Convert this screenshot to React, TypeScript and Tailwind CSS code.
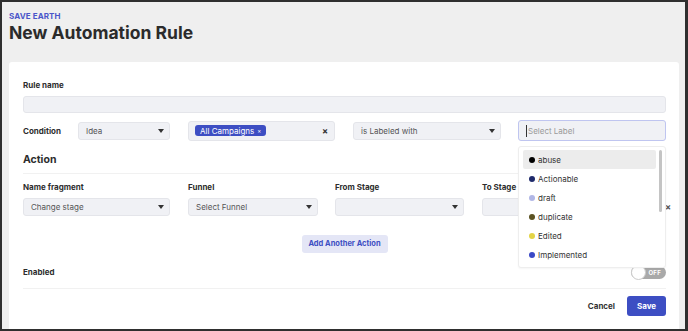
import React from "react";

const Caret = () => (
  <svg className="w-[6px] h-[4px]" viewBox="0 0 6 4">
    <path d="M0 0h6L3 4z" fill="#333" />
  </svg>
);

const Select = ({ value, width }: { value: string; width: string }) => (
  <div
    className={`${width} h-[18px] flex items-center justify-between pl-[7px] pr-[5px] bg-[#f0f1f5] border border-[#e4e5ea] rounded-[3px] text-[8px] text-[#555]`}
  >
    <span>{value}</span>
    <Caret />
  </div>
);

const labels = [
  { name: "abuse", color: "bg-black", active: true },
  { name: "Actionable", color: "bg-[#1f2a6b]" },
  { name: "draft", color: "bg-[#b1b7e6]" },
  { name: "duplicate", color: "bg-[#5b5222]" },
  { name: "Edited", color: "bg-[#e3d447]" },
  { name: "Implemented", color: "bg-[#3a49c6]" },
];

export default function App() {
  return (
    <div
      className="w-[688px] h-[331px] overflow-hidden bg-[#efefef] border-[#2f2f2f] border-t-2 border-l-2 border-b-2 border-r-[3px] pl-[7px] pr-[6px] text-[#2d2d2d]"
      style={{ fontFamily: "Inter, 'Noto Sans', sans-serif" }}
    >
      <div className="pt-[8px] text-[8px] font-bold text-[#4a56c9] tracking-[0.1px] leading-[12px]">
        SAVE EARTH
      </div>
      <h1 className="text-[17.5px] font-bold leading-[22px] text-[#2b2b2b]">
        New Automation Rule
      </h1>

      <div className="relative mt-[18px] bg-white rounded-t-[3px] pl-[14px] pr-[13px] pt-[18px] h-[300px]">
        <div className="text-[8px] font-bold leading-[10px]">Rule name</div>
        <div className="mt-[6px] h-[17px] bg-[#f0f1f5] border border-[#e4e5ea] rounded-[3px]" />

        <div className="mt-[7px] flex items-center">
          <div className="w-[55px] text-[8px] font-bold">Condition</div>
          <Select value="Idea" width="w-[92px]" />
          <div className="ml-[18px] w-[147px] h-[20px] flex items-center justify-between pl-[6px] pr-[6px] bg-[#f0f1f5] border border-[#e4e5ea] rounded-[3px]">
            <span className="bg-[#3d4ec3] text-white text-[8px] rounded-[3px] px-[5px] h-[11px] flex items-center gap-[3px]">
              All Campaigns <span className="text-[6px]">×</span>
            </span>
            <span className="text-[9px] font-bold text-[#333]">×</span>
          </div>
          <div className="ml-[18px]">
            <Select value="is Labeled with" width="w-[148px]" />
          </div>
          <div className="ml-[17px] w-[148px] h-[21px] flex items-center pl-[7px] bg-[#f0f1f5] border border-[#bfc5f0] rounded-[3px] text-[8px] text-[#999]">
            <span className="border-l border-[#333] pl-[1px]">Select Label</span>
          </div>
        </div>

        <div className="mt-[11px] text-[10.5px] font-bold leading-[16px]">Action</div>
        <div className="mt-[5px] h-[1px] bg-[#f1f1f1]" />

        <div className="mt-[8px] flex text-[8px] font-bold leading-[10px]">
          <div className="w-[165px]">Name fragment</div>
          <div className="w-[147px]">Funnel</div>
          <div className="w-[147px]">From Stage</div>
          <div>To Stage</div>
        </div>
        <div className="mt-[6px] flex items-center">
          <Select value="Change stage" width="w-[147px]" />
          <div className="ml-[18px]">
            <Select value="Select Funnel" width="w-[130px]" />
          </div>
          <div className="ml-[17px]">
            <Select value="" width="w-[129px]" />
          </div>
          <div className="ml-[18px]">
            <Select value="" width="w-[130px]" />
          </div>
          <span className="ml-auto mr-[-5px] text-[9px] font-bold text-[#555]">×</span>
        </div>

        <div className="mt-[19px] flex justify-center">
          <button className="w-[86px] h-[18px] bg-[#e4e6f6] text-[#3d4ec3] text-[7.5px] font-bold rounded-[3px]">
            Add Another Action
          </button>
        </div>

        <div className="mt-[12px] flex items-center justify-between h-[14px]">
          <div className="text-[8px] font-bold">Enabled</div>
          <div className="w-[35px] h-[13px] bg-[#a9a9a9] rounded-full flex items-center justify-end pr-[5px] relative">
            <div className="absolute left-0 top-[-1px] w-[15px] h-[15px] rounded-full bg-white border border-[#ccc]" />
            <span className="text-[6px] font-bold text-white tracking-[0.3px]">OFF</span>
          </div>
        </div>
        <div className="mt-[9px] h-[1px] bg-[#f1f1f1]" />

        <div className="mt-[7px] flex items-center justify-end gap-[12px]">
          <span className="text-[8px] font-bold text-[#333]">Cancel</span>
          <button className="w-[39px] h-[20px] bg-[#3d4ec3] text-white text-[8px] font-bold rounded-[3px]">
            Save
          </button>
        </div>

        <div className="absolute left-[509px] top-[84px] w-[148px] h-[122px] bg-white border border-[#eeeeee] rounded-[3px] shadow-[0_1px_2px_rgba(0,0,0,0.04)] pt-[3px] pl-[4px] pr-[3px]">
          <div className="flex">
            <div className="flex-1">
              {labels.map((l) => (
                <div
                  key={l.name}
                  className={`h-[19px] flex items-center gap-[3px] pl-[6px] text-[8px] text-[#333] rounded-[2px] ${l.active ? "bg-[#ececec]" : ""}`}
                >
                  <span className={`w-[6px] h-[6px] rounded-full ${l.color}`} />
                  {l.name}
                </div>
              ))}
            </div>
            <div className="w-[3px] ml-[3px] h-[62px] bg-[#c4c4c4] rounded-full" />
          </div>
        </div>
      </div>
    </div>
  );
}
